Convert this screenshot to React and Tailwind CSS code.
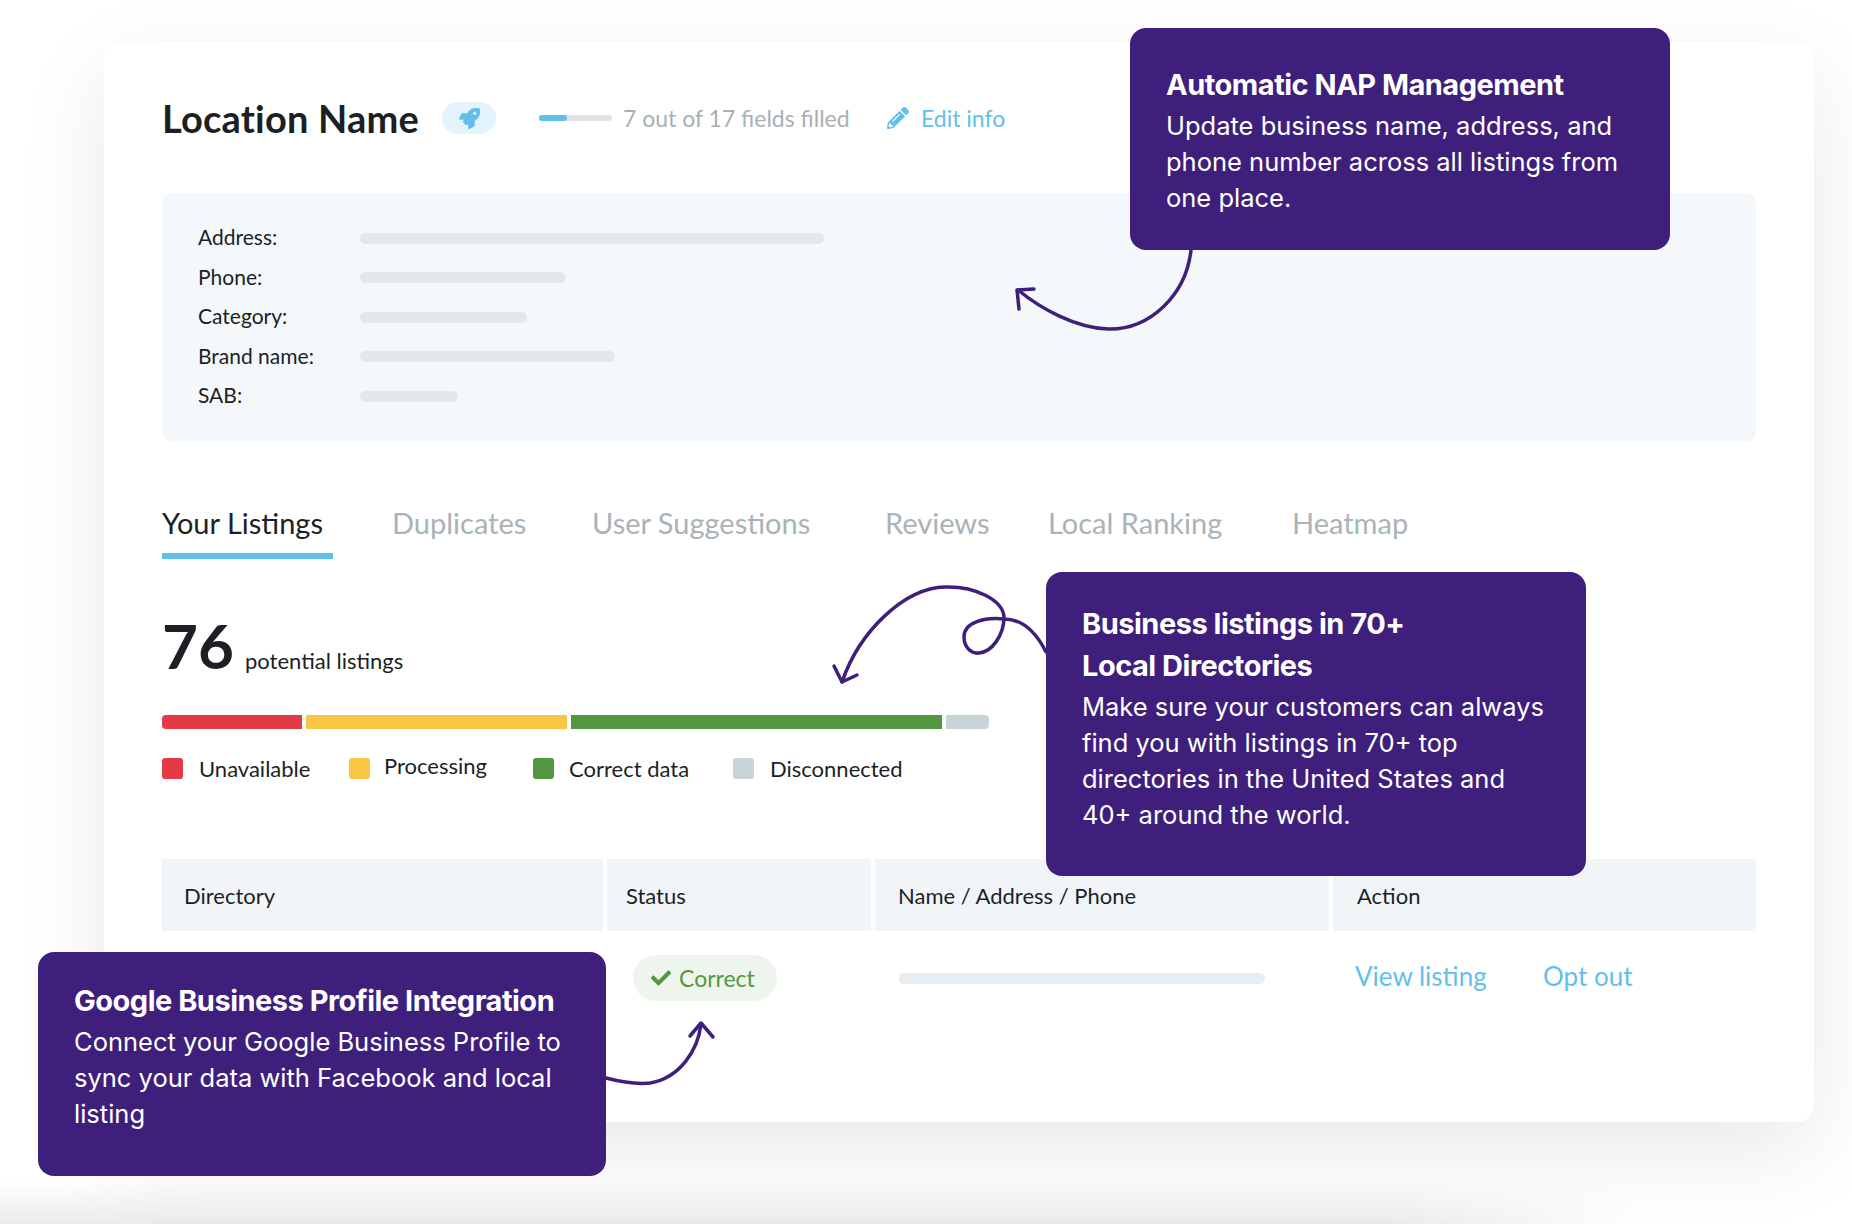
import { FaRocket, FaPencilAlt, FaCheck } from "react-icons/fa"

const fields = [
  { label: "Address:", width: "w-[464px]" },
  { label: "Phone:", width: "w-[206px]" },
  { label: "Category:", width: "w-[167px]" },
  { label: "Brand name:", width: "w-[255px]" },
  { label: "SAB:", width: "w-[98px]" },
]

function Callout({ className, title, children }) {
  return (
    <div className={`absolute z-20 rounded-[16px] bg-[#3e207c] text-white font-['Inter',sans-serif] px-[36px] ${className}`}>
      <h3 className="text-[29px] font-bold leading-[42px] tracking-[-0.5px]">{title}</h3>
      <p className="mt-[2px] text-[25.5px] leading-[36px]">{children}</p>
    </div>
  )
}

export default function App() {
  return (
    <div className="relative w-[1852px] h-[1224px] overflow-hidden bg-white font-['Lato',sans-serif] text-[#1c1f24]">
      {/* bottom strip */}
      <div className="absolute left-0 bottom-0 w-[1640px] h-[44px] bg-gradient-to-b from-transparent to-[#ebebeb] [mask-image:linear-gradient(to_right,black_85%,transparent)]" />

      {/* CARD */}
      <div className="absolute left-[104px] top-[42px] w-[1710px] h-[1080px] rounded-[16px] bg-white px-[58px] pt-[52px] shadow-[0_30px_90px_rgba(0,0,0,0.09)]">
        <div className="flex items-center h-[48px]">
          <h1 className="w-[280px] text-[38px] font-bold leading-none tracking-[0.2px]">Location Name</h1>
          <div className="flex w-[54px] h-[32px] items-center justify-center rounded-full bg-[#e3f4fd] text-[#62bfec]">
            <FaRocket className="text-[21px]" />
          </div>
          <div className="ml-[43px] w-[73px] h-[6px] rounded-full bg-[#e3e3e3]">
            <div className="w-[28px] h-[6px] rounded-full bg-[#62bfec]" />
          </div>
          <span className="ml-[11px] w-[264px] text-[23px] text-[#a9b0b3]">7 out of 17 fields filled</span>
          <FaPencilAlt className="text-[22px] text-[#62bfec]" />
          <span className="ml-[12px] text-[23px] text-[#62bfec]">Edit info</span>
        </div>

        <div className="mt-[51px] h-[249px] rounded-[10px] bg-[#f5f8fa] pl-[36px] pt-[24px]">
          {fields.map((f) => (
            <div key={f.label} className="flex items-center h-[39.5px]">
              <span className="w-[162px] text-[21px] leading-none">{f.label}</span>
              <div className={`h-[11px] rounded-full bg-[#e2e9ec] mt-[3px] ${f.width}`} />
            </div>
          ))}
        </div>

        <div className="mt-[50px] flex text-[29px] text-[#a9b3b8]">
          <div className="mr-[59px] flex h-[67px] w-[171px] items-center border-b-[6px] border-[#62bfec] text-[#1c1f24]">Your Listings</div>
          <div className="flex h-[61px] w-[200px] items-center">Duplicates</div>
          <div className="flex h-[61px] w-[293px] items-center">User Suggestions</div>
          <div className="flex h-[61px] w-[163px] items-center">Reviews</div>
          <div className="flex h-[61px] w-[244px] items-center">Local Ranking</div>
          <div className="flex h-[61px] items-center">Heatmap</div>
        </div>

        <div className="mt-[56px] flex items-baseline h-[60px]">
          <span className="w-[83px] text-[62px] font-bold leading-[60px]">76</span>
          <span className="text-[22px]">potential listings</span>
        </div>

        <div className="mt-[40px] flex gap-[4px] h-[14px] w-[827px]">
          <div className="w-[140px] rounded-l-[4px] bg-[#e43a45]" />
          <div className="w-[261px] bg-[#f8c642]" />
          <div className="w-[371px] bg-[#539840]" />
          <div className="w-[43px] rounded-r-[4px] bg-[#c9d4d9]" />
        </div>

        <div className="mt-[29px] flex h-[21px] items-center text-[22px]">
          <div className="flex w-[187px] items-center gap-[16px]">
            <div className="w-[21px] h-[21px] rounded-[3px] bg-[#e43a45]" />
            <span>Unavailable</span>
          </div>
          <div className="flex w-[184px] items-center gap-[14px]">
            <div className="w-[21px] h-[21px] rounded-[3px] bg-[#f8c642]" />
            <span className="-translate-y-[3px]">Processing</span>
          </div>
          <div className="flex w-[200px] items-center gap-[15px]">
            <div className="w-[21px] h-[21px] rounded-[3px] bg-[#539840]" />
            <span>Correct data</span>
          </div>
          <div className="flex items-center gap-[16px]">
            <div className="w-[21px] h-[21px] rounded-[3px] bg-[#c9d4d9]" />
            <span>Disconnected</span>
          </div>
        </div>

        {/* TABLE */}
        <div className="mt-[80px] grid grid-cols-[441px_264px_454px_423px] gap-x-[4px] text-[22px]">
          <div className="flex h-[72px] items-center bg-[#f1f5f8] pl-[22px]">Directory</div>
          <div className="flex h-[72px] items-center bg-[#f1f5f8] pl-[19px]">Status</div>
          <div className="flex h-[72px] items-center bg-[#f1f5f8] pl-[23px]">Name / Address / Phone</div>
          <div className="flex h-[72px] items-center bg-[#f1f5f8] pl-[24px]">Action</div>

          <div className="mt-[24px]" />
          <div className="mt-[24px] pl-[26px]">
            <div className="flex h-[46px] w-[144px] items-center gap-[8px] rounded-full bg-[#eef5ec] pl-[18px] text-[#539840]">
              <FaCheck className="text-[20px]" />
              <span className="text-[23px]">Correct</span>
            </div>
          </div>
          <div className="mt-[24px] flex h-[46px] items-center pl-[24px]">
            <div className="h-[11px] w-[366px] rounded-full bg-[#e7edf0]" />
          </div>
          <div className="mt-[24px] flex h-[46px] items-center pl-[22px] text-[26px] text-[#62bfec]">
            <span className="w-[188px] -translate-y-[2px]">View listing</span>
            <span className="-translate-y-[2px]">Opt out</span>
          </div>
        </div>
      </div>

      {/* ARROWS */}
      <svg className="absolute left-0 top-0 z-10" width="1852" height="1224" viewBox="0 0 1852 1224" fill="none" stroke="#3e207c" strokeWidth="3.5" strokeLinecap="round" strokeLinejoin="round">
        <path d="M1191 250C1186 295 1150 330 1108 329C1075 328 1040 308 1018 290" />
        <path d="M1019 309L1017 290L1034 289" />
        <path d="M1046 652C1036 632 1022 619 1004 619C985 617 964 622 964 637C964 648 972 654 979 653C992 652 1004 635 1004 617C1003 600 975 586 945 587C905 588 860 630 842 682" />
        <path d="M834 666L842 682L857 675" />
        <path d="M606 1078C625 1083 640 1084 650 1083C680 1078 698 1050 701 1024" />
        <path d="M690 1036L701 1023L713 1037" />
      </svg>

      <Callout className="left-[1130px] top-[28px] w-[540px] h-[222px] pt-[36px]" title="Automatic NAP Management">
        Update business name, address, and phone number across all listings from one place.
      </Callout>

      <Callout className="left-[1046px] top-[572px] w-[540px] h-[304px] pt-[31px]" title={<>Business listings in 70+<br />Local Directories</>}>
        Make sure your customers can always find you with listings in 70+ top directories in the United States and 40+ around the world.
      </Callout>

      <Callout className="left-[38px] top-[952px] w-[568px] h-[224px] pt-[28px]" title="Google Business Profile Integration">
        Connect your Google Business Profile to sync your data with Facebook and local listing
      </Callout>
    </div>
  )
}
